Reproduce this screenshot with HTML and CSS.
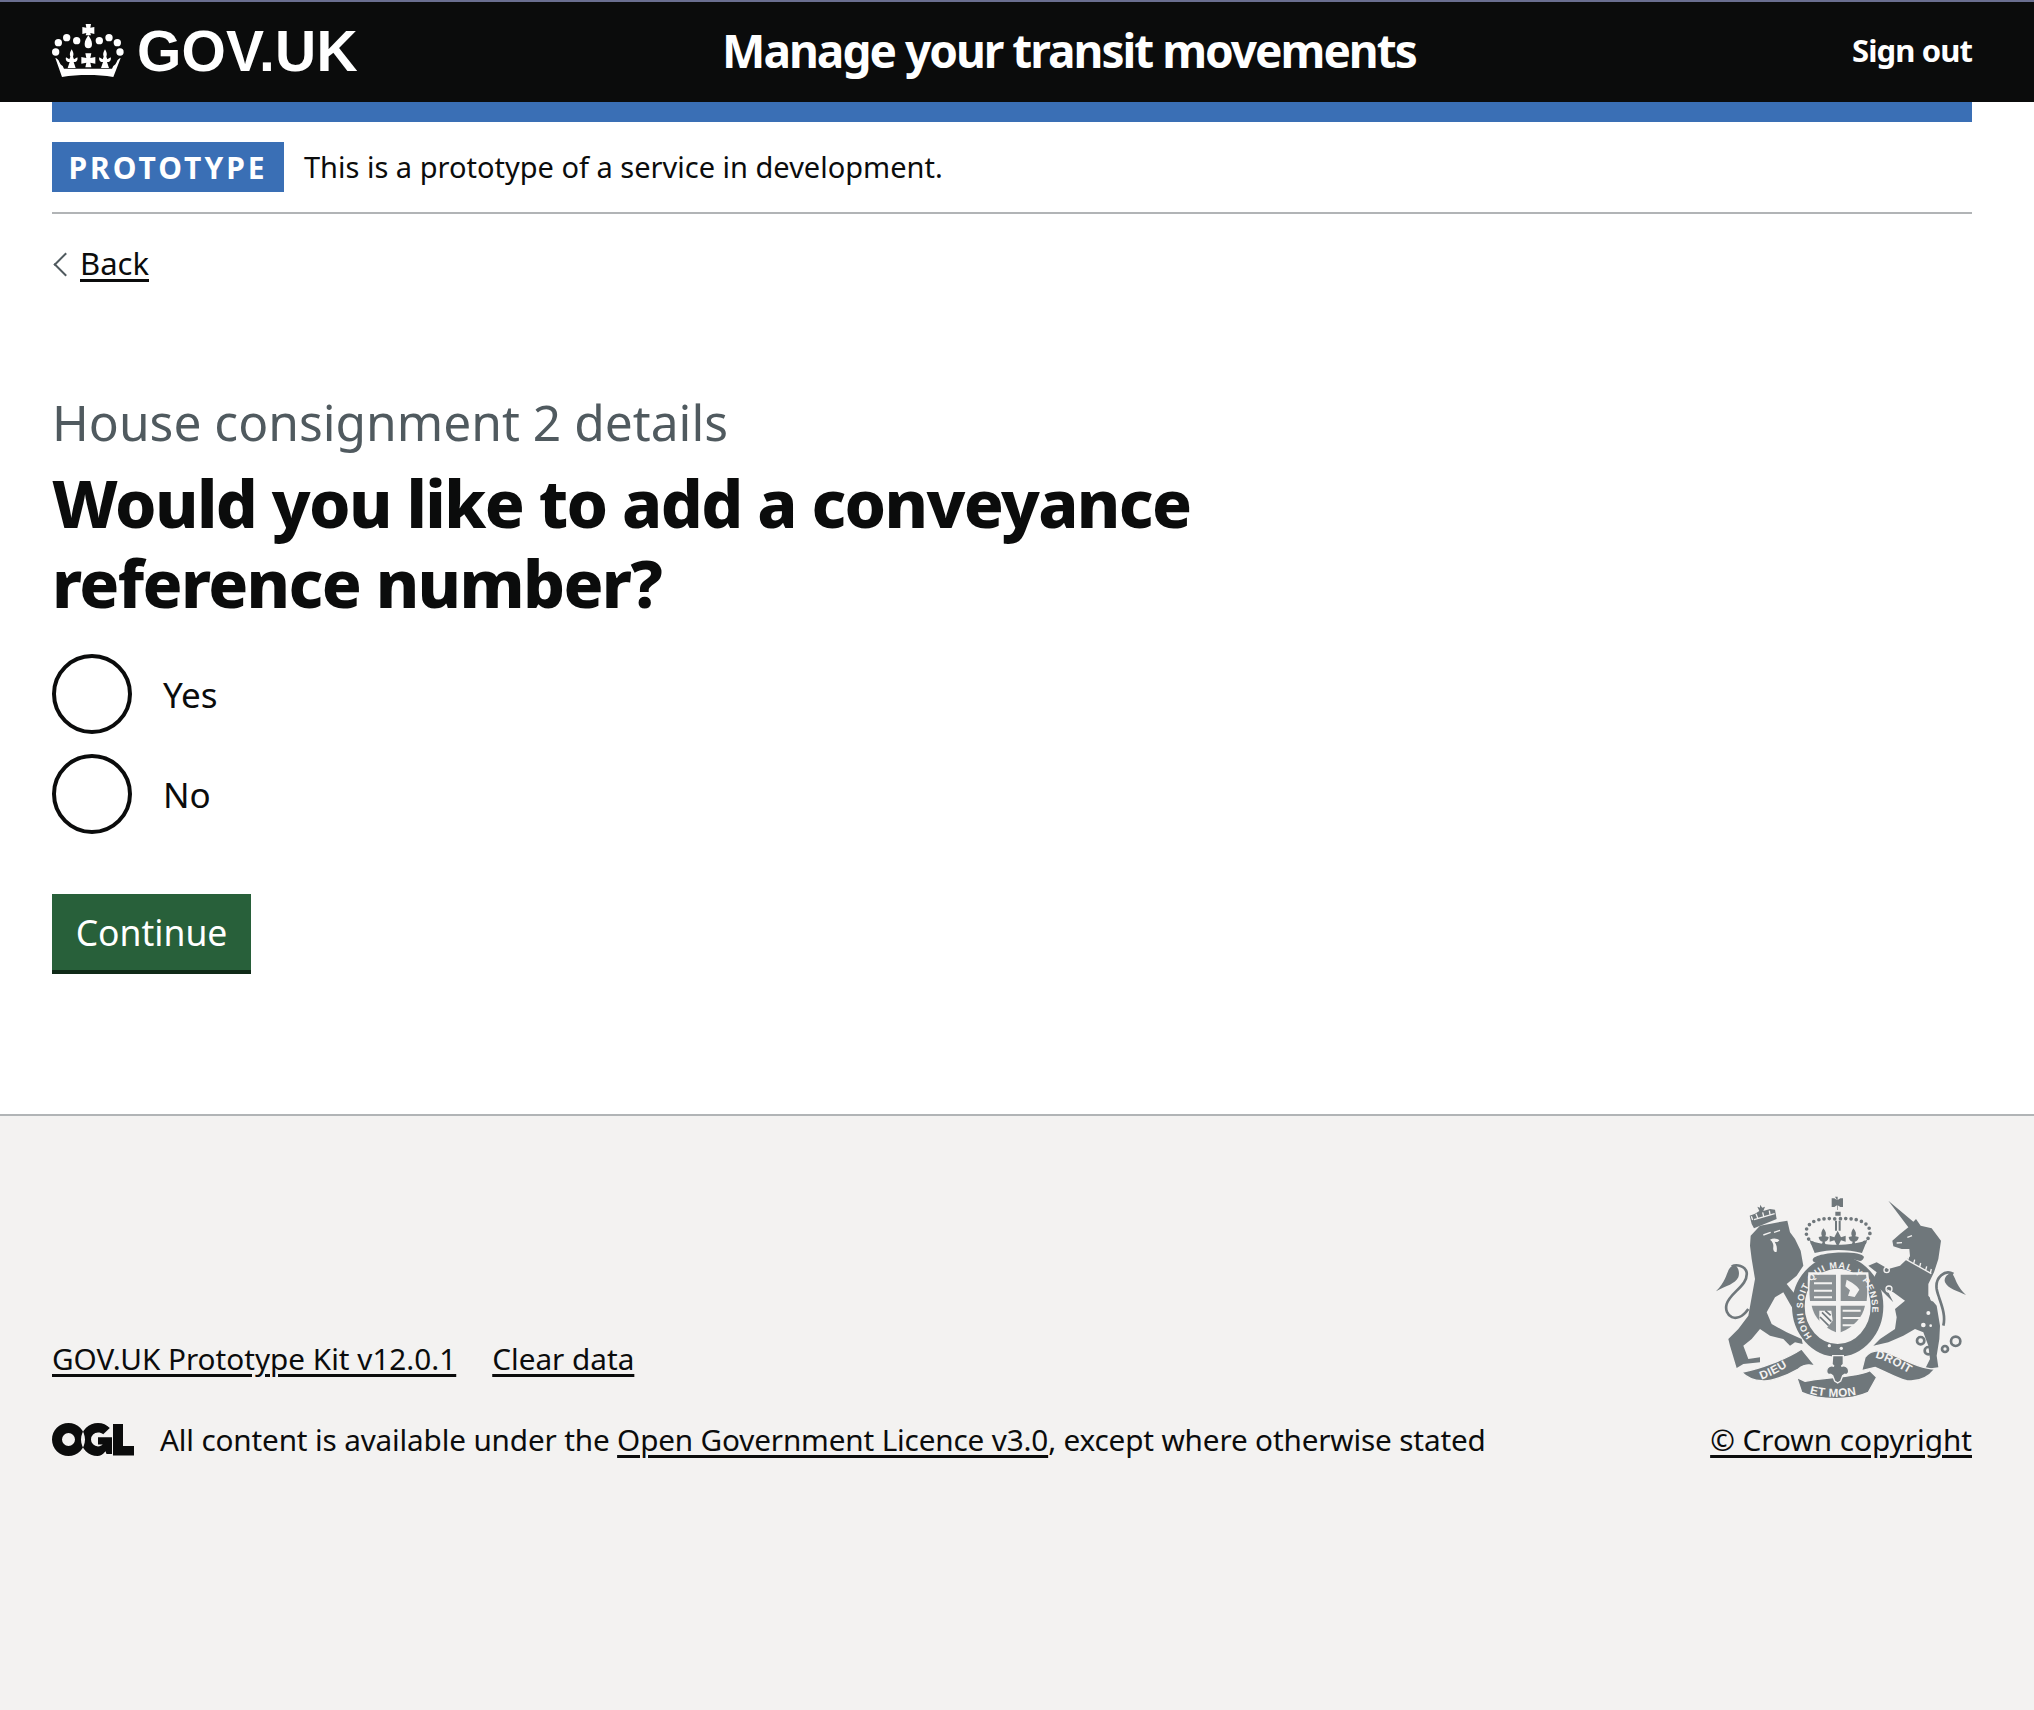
FILE: index.html
```html
<!DOCTYPE html>
<html lang="en">
<head><meta charset="utf-8"><title>Manage your transit movements</title><link rel="stylesheet" href="styles.css"></head>
<body>
<header class="site-header">
  <a class="logo" href="#">
    <svg class="crown" viewBox="36 24 216 159" aria-hidden="true">
      <g fill="#fff">
        <circle cx="55" cy="80" r="11"/><circle cx="80" cy="65" r="11"/><circle cx="110" cy="74" r="11"/>
        <circle cx="178" cy="74" r="11"/><circle cx="207" cy="65" r="11"/><circle cx="232" cy="80" r="11"/>
        <circle cx="47" cy="108" r="11"/><circle cx="240" cy="108" r="11"/>
        <path d="M137 24h16l-2 11 12-2v21l-12-3 2 7h-16l2-7-12 3V33l12 2z"/>
        <path d="M145 58c-5 8-11 16-11 26a11 13 0 0 0 22 0c0-10-6-18-11-26z"/>
        <path d="M136 112h18l-3 14 15-3v20l-15-3 3 14h-18l3-14-15 3v-20l15 3z"/>
        <path d="M95 100c-5 8-7 14-4 22l-3 8-10-6c-2 6 0 12 6 14h5l-6 18h24l-6-18h5c6-2 8-8 6-14l-10 6-3-8c3-8 1-14-4-22z"/>
        <path d="M195 100c-5 8-7 14-4 22l-3 8-10-6c-2 6 0 12 6 14h5l-6 18h24l-6-18h5c6-2 8-8 6-14l-10 6-3-8c3-8 1-14-4-22z"/>
        <path d="M46 126c6 2 10 6 12 12 2 6 6 10 10 12l4 8h144l4-8c4-2 8-6 10-12 2-6 6-10 12-12l-22 57c-50-8-104-8-154 0z"/>
      </g>
    </svg>
    <span class="logo-text">GOV.UK</span>
  </a>
  <a class="service" href="#">Manage your transit movements</a>
  <a class="signout" href="#">Sign out</a>
</header>
<div class="container">
  <div class="phase">
    <strong class="tag">PROTOTYPE</strong>
    <span class="phase-text">This is a prototype of a service in development.</span>
  </div>
  <a class="back" href="#">Back</a>
  <main class="main">
    <span class="caption">House consignment 2 details</span>
    <h1 class="title">Would you like to add a conveyance reference number?</h1>
    <div class="radios">
      <label class="radio"><span class="ring"></span><span class="radio-label">Yes</span></label>
      <label class="radio"><span class="ring"></span><span class="radio-label">No</span></label>
    </div>
    <button class="button">Continue</button>
  </main>
</div>
<footer class="footer">
  <div class="footer-inner">
    <div class="footer-meta">
      <div class="footer-links"><a href="#">GOV.UK Prototype Kit v12.0.1</a><a href="#">Clear data</a></div>
      <div class="licence">
        <svg class="ogl" viewBox="0 0 82 33" aria-hidden="true"><path fill="#0b0c0c" fill-rule="evenodd" d="M16.500 0C25.600 0 33 7.400 33 16.500S25.600 33 16.500 33 0 25.600 0 16.500 7.400 0 16.500 0zm0 10a6.500 6.500 0 1 0 0 13 6.500 6.500 0 0 0 0-13zM46 0c4.700 0 8.800 1.900 11.800 5l-6.600 6.300c-1.300-1.300-3.100-1.900-5.200-1.900a7 7 0 0 0 0 14c2 0 3.500-.6 4.700-1.800h-4.700v-7.400h14v16.800h-5.500l-1-2.800C50.800 31.700 48 33 45.500 33 36.400 33 29 25.600 29 16.500S36.900 0 46 0zM61 1h10v22h11v9.500H61z"/></svg>
        <span>All content is available under the <a href="#">Open Government Licence v3.0</a>, except where otherwise stated</span>
      </div>
    </div>
    <div class="footer-crown">
      <svg class="crest" viewBox="105 78 756 615" aria-hidden="true">
        <defs>
          <path id="arcL" d="M245 632C280 618 320 598 352 570"/>
          <path id="arcR" d="M585 566C625 576 672 604 722 634"/>
          <path id="arcB" d="M385 672C430 688 520 688 562 666"/>
          <path id="arcG" d="M398 505A104 122 0 1 1 552 498"/>
        </defs>
        <g class="crest-fill">
          <path d="M212 200L240 170 322 155 330 190 345 210 362 245 370 290 350 320 320 345 340 370 375 400 370 430 345 430 330 405 310 370 285 385 260 430 275 465 320 490 365 510 368 525 345 520 330 530 310 510 270 500 240 480 215 510 190 530 205 570 240 565 240 580 190 585 170 597 150 530 145 510 175 480 205 440 215 385 225 330 215 270 210 230z"/>
          <path d="M165 288C135 295 150 325 108 367 140 350 165 345 175 325 180 310 175 295 165 288z"/>
          <path d="M215 165L209 140 225 134 238 126 232 113 240 116 240 107 247 116 255 113 250 126 270 120 285 122 290 150 222 178z"/>
        </g>
        <g class="crest-line"><path d="M205 420C170 470 130 440 140 405 150 370 205 350 200 310 195 290 170 285 155 292"/></g>
        <g class="crest-cut">
          <path d="M222 152L284 134M214 142l4 11M228 134l5 13M248 130l3 12M268 125l2 12"/>
          <path d="M250 198l22-8M282 190l18-6"/>
        </g>
        <path class="crest-bg" d="M270 212c10-6 22-4 28 2-4 6-8 6-14 4 6 10 8 18 6 30-6 4-12-4-10-14 1-8-2-16-10-22z"/>
        <g class="crest-fill">
          <path d="M625 95L700 158 708 150 722 170 755 178 783 215 775 270 762 310 745 345 745 380 770 410 780 470 778 510 770 560 775 595 735 600 750 570 745 530 730 490 705 480 670 500 625 520 580 530 600 510 645 480 650 445 645 420 675 395 640 370 620 360 640 400 600 360 575 340 590 310 565 290 590 280 625 300 660 290 690 262 688 240 665 240 640 232 637 215 660 195 685 175z"/>
          <path d="M815 312C830 330 825 345 858 378 830 365 805 360 795 340 790 325 805 312 815 312z"/>
        </g>
        <g class="crest-line">
          <path d="M790 470C800 430 775 390 770 360 765 325 795 300 820 315"/>
          <circle cx="722" cy="515" r="11"/><circle cx="745" cy="545" r="11"/><circle cx="795" cy="540" r="9"/><circle cx="827" cy="517" r="14"/>
        </g>
        <g class="crest-cut">
          <path d="M662 262l92 52M670 255l-3 12M686 262l-3 12M704 272l-3 12M722 282l-3 12M740 292l-3 12M754 300l-3 12"/>
          <circle cx="620" cy="303" r="8"/><circle cx="627" cy="360" r="9"/><circle cx="761" cy="386" r="9"/>
          <path d="M682 205l14-5M650 222l16-1"/>
        </g>
        <g class="crest-bg"><circle cx="745" cy="432" r="6"/><circle cx="730" cy="468" r="7"/><circle cx="752" cy="470" r="4"/></g>
        <g class="crest-fill">
          <path d="M465 83h8v10l8-5h8v26h-8l-8-5v14h-2v-14l-8 5h-8V88h8l8 5z"/>
          <path d="M466 128h16v12h-16zM465 155h6v30h-6zM476 155h6v30h-6z"/>
          <path d="M473 185l10 20 14-5v18l-14-4-10 20-10-20-14 4v-18l14 5z"/>
          <path d="M430 178c-6 10-8 16-4 24l-10 2c0 8 6 14 12 14l-4 14 14 0-4-14c6 0 12-6 12-14l-10-2c4-8 2-14-6-24z"/>
          <path d="M520 178c-6 10-8 16-4 24l-10 2c0 8 6 14 12 14l-4 14 14 0-4-14c6 0 12-6 12-14l-10-2c4-8 2-14-6-24z"/>
          <path d="M388 212C420 232 520 232 562 212L546 252C500 240 450 240 404 252z"/>
          <path d="M398 272C402 248 545 242 552 264 550 272 545 276 540 276 500 262 445 262 408 280 402 280 398 278 398 272z"/>
        </g>
        <path class="crest-dots" d="M397 222C358 190 380 140 470 150 570 140 590 190 552 222"/>
        <ellipse class="crest-ring" cx="473" cy="412" rx="118" ry="132"/>
        <path class="crest-bg" d="M385 310H565C575 400 545 480 475 505 405 480 375 400 385 310z"/>
        <g class="crest-shield">
          <path d="M392 317H468V396H390C387 370 388 340 392 317z"/>
          <path d="M482 317H558C562 340 563 370 560 396H482z"/>
          <path d="M395 410H468V490C430 475 402 445 395 410z"/>
          <path d="M482 410H555C548 445 520 475 482 490z"/>
        </g>
        <g class="crest-bg">
          <path d="M402 340h54v6h-54zM402 362h54v6h-54zM402 382h54v6h-54zM488 422h54v6h-54zM488 444h54v6h-54zM488 466h36v6h-36z"/>
          <path d="M500 332c14 8 30 16 38 30l-14 22-20-4 6-16-14-12z"/>
          <path d="M418 425l36 0 4 30-24 30-16-22z"/>
        </g>
        <path class="crest-ln-thin" d="M426 430l28 28M420 444l26 26M436 425l16 14"/>
        <text class="crest-garter"><textPath href="#arcG" startOffset="3">HONI SOIT QUI MAL Y PENSE</textPath></text>
        <path class="crest-fill" d="M402 518C440 530 510 530 550 512 535 540 510 552 473 554 440 552 415 540 402 518z"/>
        <g class="crest-bg"><circle cx="448" cy="530" r="5"/><circle cx="484" cy="538" r="5"/></g>
        <g class="crest-fill crest-edge">
          <path d="M185 610C240 600 320 570 365 540L405 590C395 590 380 580 355 600 320 620 270 640 245 635 220 635 200 625 185 610z"/>
          <path d="M555 565C570 545 590 540 620 550 670 570 720 600 765 600 745 625 720 640 680 635 650 628 610 605 585 595L545 605z"/>
          <path d="M350 625L375 637C430 625 530 625 570 605L590 625 565 670C510 695 420 695 365 670z"/>
          <path d="M458 560h32v26l-6 6c10-4 22 2 22 14 0 8-6 12-12 10l-6 4-6 16-9 6-9-6-6-16-6-4c-6 2-12-2-12-10 0-12 12-18 22-14l-6-6z"/>
        </g>
        <g class="crest-words">
          <text><textPath href="#arcL">DIEU</textPath></text>
          <text><textPath href="#arcR">DROIT</textPath></text>
          <text><textPath href="#arcB" startOffset="4">ET MON</textPath></text>
        </g>
      </svg>
      <a href="#">© Crown copyright</a>
    </div>
  </div>
</footer>
</body>
</html>
```
FILE: styles.css
```css
* { box-sizing: border-box; }
html, body { margin: 0; }
body { font-family: "Noto Sans", sans-serif; color: #0b0c0c; background: #f3f2f1; }
a { color: #0b0c0c; text-decoration-thickness: 2.500px; text-underline-offset: 4px; }
.site-header { height: 102px; background: #0b0c0c; border-top: 2px solid #6a6f90; display: flex; align-items: center; padding: 0 62px 4px 52px; }
.logo { display: flex; align-items: center; gap: 13px; color: #fff; text-decoration: none; width: 670px; }
.crown { width: 72px; height: 53px; }
.logo-text { font-family: "Liberation Sans", sans-serif; font-weight: 700; font-size: 57px; line-height: 1; margin-top: 2px; letter-spacing: .2px; }
.service { color: #fff; font-weight: 700; font-size: 46px; letter-spacing: -2px; text-decoration: none; flex: 1; }
.signout { color: #fff; font-weight: 700; font-size: 31px; letter-spacing: -.9px; text-decoration: none; }
.container { background: #fff; padding: 0 62px 0 52px; height: 1012px; }
.phase { border-top: 20px solid #3a6fb5; border-bottom: 2px solid #b1b4b6; display: flex; align-items: center; padding: 20px 0; height: 112px; gap: 20px; }
.tag { background: #3a6fb5; color: #fff; height: 50px; width: 232px; display: flex; align-items: center; justify-content: center; font-size: 30px; letter-spacing: 3px; font-weight: 700; }
.phase-text { font-size: 29px; margin-bottom: 2px; }
.back { display: inline-block; font-size: 31px; margin: 29px 0 0 28px; position: relative; line-height: 40px; }
.back::before { content: ""; position: absolute; left: -23px; top: 13px; width: 15px; height: 15px; border-left: 2px solid #505a5f; border-bottom: 2px solid #505a5f; transform: rotate(45deg); }
.main { padding-top: 99px; }
.caption { display: block; color: #505a5f; font-size: 49.700px; line-height: 80px; }
.title { font-size: 66px; line-height: 80px; font-weight: 800; letter-spacing: -1.600px; margin: 0 0 32px; max-width: 1200px; }
.radios { display: flex; flex-direction: column; gap: 20px; margin-bottom: 60px; }
.radio { display: flex; align-items: center; gap: 31px; font-size: 35px; }
.ring { width: 80px; height: 80px; border: 4px solid #0b0c0c; border-radius: 50%; background: #fff; }
.button { display: block; background: #28603a; color: #fff; border: 0; border-bottom: 4px solid #0f2a18; width: 199px; height: 80px; font: 35.500px "Noto Sans", sans-serif; }
.footer { border-top: 2px solid #b1b4b6; height: 596px; }
.footer-inner { padding: 60px 62px 0 52px; display: flex; justify-content: space-between; align-items: flex-end; height: 344px; font-size: 29.700px; }
.footer-links { display: flex; gap: 36px; margin-bottom: 40px; }
.licence { display: flex; gap: 26px; align-items: center; letter-spacing: -.15px; }
.ogl { width: 82px; height: 33px; }
.footer-crown { display: flex; flex-direction: column; align-items: flex-end; }
.crest { width: 252px; height: 205px; margin: 0 5px 19px 0; }
.crest-fill { fill: #6f777b; }
.crest-edge { stroke: #f3f2f1; stroke-width: 4; }
.crest-bg { fill: #f3f2f1; }
.crest-line { fill: none; stroke: #6f777b; stroke-width: 8; }
.crest-cut { fill: none; stroke: #f3f2f1; stroke-width: 4; }
.crest-dots { fill: none; stroke: #6f777b; stroke-width: 11; stroke-linecap: round; stroke-dasharray: 0 16; }
.crest-ring { fill: #f3f2f1; stroke: #6f777b; stroke-width: 38; }
.crest-shield { fill: #8a9093; }
.crest-ln-thin { fill: none; stroke: #6f777b; stroke-width: 5; }
.crest-garter { fill: #f3f2f1; font: 700 27px "Liberation Sans", sans-serif; letter-spacing: 3px; }
.crest-words { fill: #f3f2f1; font: 700 35px "Liberation Sans", sans-serif; letter-spacing: 1px; }
```
